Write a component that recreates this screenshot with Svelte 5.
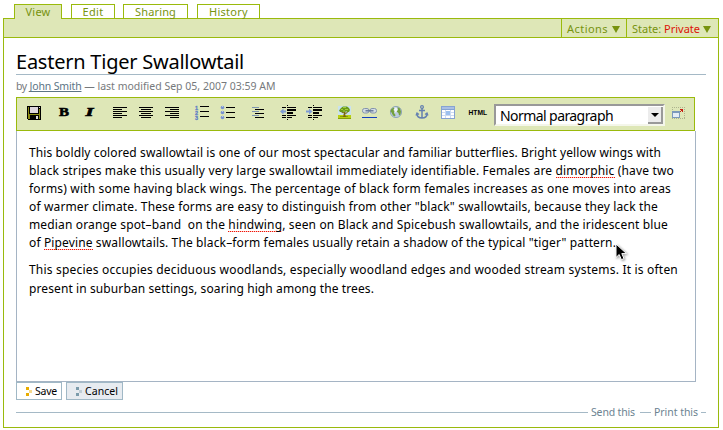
<script>
  // Spreads the letters of a run evenly so that it fills the given width.
  function fit(node, width) {
    const natural = node.getBoundingClientRect().width;
    node.style.letterSpacing = `${(width - natural) / node.textContent.length}px`;
  }

  const tabs = [
    { label: 'View', width: 48, text: 25, selected: true },
    { label: 'Edit', width: 44, text: 21 },
    { label: 'Sharing', width: 65, text: 41 },
    { label: 'History', width: 63, text: 39 }
  ];

  const paragraphs = [
    [
      [632, 'This boldly colored swallowtail is one of our most spectacular and familiar butterflies. Bright yellow wings with'],
      [645, 'black stripes make this usually very large swallowtail immediately identifiable. Females are *dimorphic* (have two'],
      [642, 'forms) with some having black wings. The percentage of black form females increases as one moves into areas'],
      [629, 'of warmer climate. These forms are easy to distinguish from other "black" swallowtails, because they lack the'],
      [639, 'median orange spot–band\u00a0 on the *hindwing*, seen on Black and Spicebush swallowtails, and the iridescent blue'],
      [587, 'of *Pipevine* swallowtails. The black–form females usually retain a shadow of the typical "tiger" pattern.']
    ],
    [
      [649, 'This species occupies deciduous woodlands, especially woodland edges and wooded stream systems. It is often'],
      [345, 'present in suburban settings, soaring high among the trees.']
    ]
  ];

  const groups = [
    ['save'],
    ['bold', 'italic'],
    ['left', 'center', 'right'],
    ['ol', 'ul'],
    ['dl'],
    ['outdent', 'indent'],
    ['image', 'link', 'globe', 'anchor', 'table'],
    ['html']
  ];
  const rows = [5, 7, 9, 11, 13, 15];
</script>

{#snippet icon(name)}
  <svg class="icon" width="20" height="20" viewBox="0 0 20 20" shape-rendering="crispEdges">
    {#if name === 'save'}
      <path fill="#000" d="M3 4h14v14H4v-1H3z" />
      <path fill="#8a8a12" d="M4 5h1v12H4zM15 7h1v10h-1zM5 12h10v1H5zM5 13h1v4H5z" />
      <path fill="#ddd6dd" d="M6 5h8v6H6zM15 5h1v1h-1z" />
      <path fill="#ddd" d="M12 14h2v3h-2z" />
    {:else if name === 'bold'}
      <text x="5" y="14" textLength="10" lengthAdjust="spacingAndGlyphs" class="b">B</text>
    {:else if name === 'italic'}
      <text x="5.500" y="14" textLength="8" lengthAdjust="spacingAndGlyphs" class="b i">I</text>
    {:else if name === 'left'}
      {#each rows as y, i}<rect x="3" {y} width={i % 2 ? 9 : 14} height="1" />{/each}
    {:else if name === 'center'}
      {#each rows as y, i}<rect x={i % 2 ? 5 : 3} {y} width={i % 2 ? 10 : 14} height="1" />{/each}
    {:else if name === 'right'}
      {#each rows as y, i}<rect x={i % 2 ? 8 : 3} {y} width={i % 2 ? 9 : 14} height="1" />{/each}
    {:else if name === 'ol'}
      <path d="M8 4h9v1H8zM8 9h9v1H8zM8 14h9v1H8z" />
      <g class="num"><text x="3" y="7.500">1</text><text x="3" y="12.500">2</text><text x="3" y="17.500">3</text></g>
    {:else if name === 'ul'}
      <path d="M8 5h9v1H8zM8 10h9v1H8zM8 15h9v1H8z" />
      {#each [5.5, 10.5, 15.5] as y}
        <circle cx="4.500" cy={y} r="1.800" fill="#7892d0" shape-rendering="auto" />
        <rect x="4" y={y - 1.5} width="1" height="1" fill="#b9c8ea" />
      {/each}
    {:else if name === 'dl'}
      <path fill="#7c93b0" d="M4 5h7v1H4zM4 9h7v1H4zM4 13h7v1H4z" />
      <path d="M7 7h9v1H7zM7 11h9v1H7zM7 15h9v1H7z" />
    {:else if name === 'outdent' || name === 'indent'}
      <path d="M4 5h4v1H4zM9 5h9v1H9zM9 7h9v2H9zM9 10h6v2H9zM9 13h9v1H9zM4 13h4v1H4zM4 15h4v1H4zM9 15h5v1H9zM9 3h1v1H9zM9 17h1v1H9z" />
      {#if name === 'outdent'}
        <path fill="#7f9bd2" shape-rendering="auto" d="M2 9.500l3.500-3v2H8v2H5.500v2z" />
      {:else}
        <path fill="#7f9bd2" shape-rendering="auto" d="M8.500 9.500l-3.500-3v2H2v2h3v2z" />
      {/if}
    {:else if name === 'image'}
      <path fill="#c9e2ef" d="M4 4h13v9H4z" />
      <path fill="#b9d010" d="M4 13h13v4H4z" />
      <path fill="#84a00c" d="M4 16h13v1H4zM6 14h8v1H6z" />
      <g shape-rendering="auto">
        <path fill="#7a6412" d="M9.500 9h2v5l1 1h-4l1-1zM7 10l3 2v-1l-2-1.500zM13 10l-2 1.500v1l3-2z" />
        <path fill="#6a9a18" d="M7 6l2-1.500h4L15 6l1 2-1 2h-2l-1-1-2 1.500L8 10H6L5 8.500z" />
        <path fill="#a3cc3c" d="M9 5h3v1H9zM7 7h2v1H7zM11 7h3v1h-3zM9 8.500h2v1H9z" />
      </g>
    {:else if name === 'link'}
      <g fill="none" shape-rendering="auto" stroke="#8494ad">
        <rect x="2.500" y="6.500" width="6.500" height="4.500" rx="2" fill="#d3dce3" />
        <rect x="10" y="6.500" width="6.500" height="4.500" rx="2" fill="#d3dce3" />
        <path stroke="#5d7094" stroke-width="1.300" d="M5.500 8.800h8" />
      </g>
      <path fill="#1440bd" d="M2 15h15v1H2z" />
    {:else if name === 'globe'}
      <g shape-rendering="auto">
        <circle cx="10" cy="10" r="5.600" fill="#bdcde0" stroke="#8aa0b4" stroke-width=".9" />
        <circle cx="9" cy="8" r="2.500" fill="#eef4f9" />
        <path fill="#73a03c" d="M5 7.500l2.500-2 1 .5-1 2 1 1-.5 2 1.500 2-.5 1.500-2-1-1.500-3-1-1zM11.500 5l2.500 1.500 1 3-.5 3-1.500 1-.5-2.500-2-1.500 1.500-1.500z" />
      </g>
    {:else if name === 'anchor'}
      <g fill="none" shape-rendering="auto" stroke="#6480b0" stroke-width="1.500">
        <circle cx="10" cy="5" r="1.400" stroke-width="1.200" />
        <path d="M10 6.500v10M7 8.500h6M5 11.500c0 3 2 4.500 5 4.500s5-1.500 5-4.500" />
        <path stroke-width="1.200" d="M4 13.500l1-2.500 2 1.500M16 13.500l-1-2.500-2 1.500" />
      </g>
    {:else if name === 'table'}
      <path fill="#86a3d2" d="M3 4h14v13H3z" />
      <path fill="#fff" d="M4 8h12v8H4z" />
      <path fill="#a9bfe4" d="M4 5h12v2H4z" />
      <path fill="#cbdaf2" d="M4 10h12v1H4zM4 13h12v1H4zM7 8h1v8H7zM12 8h1v8h-1z" />
      <path fill="#9cc0ee" d="M8 9h4v4H8z" />
    {:else if name === 'html'}
      <text x="0.500" y="13" textLength="18.500" lengthAdjust="spacingAndGlyphs" class="html">HTML</text>
    {/if}
  </svg>
{/snippet}

<div class="page">
  <nav class="tabs">
    {#each tabs as tab}
      <a class:selected={tab.selected} style:width="{tab.width}px"><span use:fit={tab.text}>{tab.label}</span></a>
    {/each}
  </nav>

  <main>
    <div class="actions">
      <div class="menu first"><span use:fit={41}>Actions</span><i></i></div>
      <div class="menu"><span use:fit={68}>State: <b>Private</b></span><i></i></div>
    </div>

    <div class="content">
      <h1><span use:fit={228}>Eastern Tiger Swallowtail</span></h1>
      <div class="byline"><span class="by">by</span><u use:fit={52}>John Smith</u><span use:fit={194}>&nbsp;— last modified Sep 05, 2007 03:59 AM</span></div>

      <div class="toolbar">
        {#each groups as group}
          <div class="group">
            {#each group as name}<span class="cell">{@render icon(name)}</span>{/each}
          </div>
        {/each}
        <div class="select">
          <span class="value"><span use:fit={113}>Normal paragraph</span></span>
          <span class="drop"><i></i></span>
        </div>
        <svg class="expand" width="13" height="12" viewBox="0 0 13 12" shape-rendering="crispEdges">
          <path fill="none" stroke="#adb48e" stroke-dasharray="1 1" d="M0 .5h13M12.500 0v12M0 11.500h13M.5 0v12" />
          <path fill="#7b99bb" d="M0 4h8v7H0z" />
          <path fill="#e4edf5" d="M1 6h6v4H1z" />
          <path fill="#c81e10" d="M8 2h3v3h-1V4H9v1H8V4h1V3H8z" />
        </svg>
      </div>

      <div class="editor">
        {#each paragraphs as lines}
          <p>
            {#each lines as [width, text]}
              <span class="line"><span use:fit={width}>{#each text.split('*') as part, i}{#if i % 2}<em>{part}</em>{:else}{part}{/if}{/each}</span></span>
            {/each}
          </p>
        {/each}
      </div>

      <div class="buttons">
        <button class="save"><svg width="6" height="9" viewBox="0 0 6 9" shape-rendering="crispEdges"><path fill="#e8ac00" d="M0 0h3v3H0zM0 6h3v3H0z" /><path fill="#f6d88b" d="M3 3h3v3H3z" /></svg><span use:fit={22}>Save</span></button>
        <button class="cancel"><svg width="6" height="9" viewBox="0 0 6 9" shape-rendering="crispEdges"><path fill="#7b9bab" d="M0 0h3v3H0zM0 6h3v3H0z" /><path fill="#bfcdd5" d="M3 3h3v3H3z" /></svg><span use:fit={33}>Cancel</span></button>
      </div>

      <footer>
        <hr class="long" /><span use:fit={44}>Send this</span><hr class="mid" /><span use:fit={44}>Print this</span><hr class="short" />
      </footer>
    </div>
  </main>

  <svg class="pointer" width="14" height="19" viewBox="0 0 14 19">
    <path fill="#000" stroke="#fff" stroke-width="1" d="M1 1v13.500l3.200-3 2.200 5.200 2.600-1.100-2.200-5h4.700z" />
  </svg>
</div>

<style>
  :global(body) { background: #fff; }
  .page {
    position: relative;
    box-sizing: border-box;
    width: 723px;
    height: 430px;
    padding: 4px 4px 2px 3px;
    font: 11px/14px 'Noto Sans', 'Open Sans', sans-serif;
    color: #000;
    white-space: nowrap;
    overflow: hidden;
  }
  .tabs { display: flex; height: 14px; padding-left: 11px; }
  .tabs a {
    box-sizing: border-box;
    display: flex;
    justify-content: center;
    height: 14px;
    margin-right: 9px;
    border: 1px solid #9aba0c;
    border-bottom: 0;
    color: #77930f;
    line-height: 13px;
  }
  .tabs a:nth-child(2) { margin-right: 8px; }
  .tabs a.selected { height: 15px; background: #dee7b7; position: relative; z-index: 1; }
  main {
    box-sizing: border-box;
    width: 716px;
    height: 410px;
    border: 1px solid #9aba0c;
  }
  .actions {
    display: flex;
    justify-content: flex-end;
    height: 18px;
    background: #dee7b7;
    border-bottom: 1px solid #9aba0c;
    color: #77930f;
  }
  .menu {
    box-sizing: border-box;
    display: flex;
    align-items: center;
    justify-content: space-between;
    width: 92px;
    padding: 1px 7px 0 5px;
    border-left: 1px solid #9aba0c;
  }
  .menu.first { width: 65px; padding-right: 6px; }
  .menu b { font-weight: 400; color: #dc1408; }
  .menu i { margin-top: 2px; border: 4px solid transparent; border-top: 7px solid #77930f; border-bottom: 0; }
  .content { padding: 11px 12px 0 12px; }
  h1 {
    height: 25px;
    margin: 0;
    border-bottom: 1px solid #a5b9c6;
    font: 20px/26px 'Noto Sans', sans-serif;
  }
  .byline { height: 22px; line-height: 22px; color: #76797c; font-size: 10.500px; }
  .by { display: inline-block; width: 13.500px; letter-spacing: -.4px; }
  u { color: #5c7485; text-decoration: underline; text-underline-offset: 1px; text-decoration-skip-ink: none; }
  .toolbar {
    box-sizing: border-box;
    display: flex;
    width: 679px;
    height: 34px;
    padding: 4px 0 0 4px;
    border: 1px solid #9aba0c;
    background: #dee7b7;
  }
  .group { display: flex; margin-right: 4px; }
  .cell { display: flex; width: 26px; justify-content: center; }
  .icon { display: block; overflow: visible; }
  .b { font: 700 13px 'Liberation Serif', serif; stroke: #000; stroke-width: .6; }
  .i { font-style: italic; }
  .num { font: 700 5.500px 'Liberation Sans', sans-serif; fill: #5e7fc4; stroke: #5e7fc4; stroke-width: .3; }
  .html { font: 700 7.500px 'Liberation Sans', sans-serif; }
  .select {
    box-sizing: border-box;
    display: flex;
    width: 171px;
    height: 22px;
    margin: 2px 0 0 -1px;
    border: 2px solid #999;
    border-right-color: #f4f6ea;
    border-bottom-color: #f4f6ea;
    background: #fff;
  }
  .value { flex: 1; padding-left: 4px; font-size: 14px; line-height: 19px; }
  .drop {
    box-sizing: border-box;
    display: flex;
    align-items: center;
    justify-content: center;
    width: 15px;
    height: 17px;
    margin-top: 1px;
    border-right: 2px solid #999;
    border-bottom: 2px solid #999;
    background: #ececec;
  }
  .drop i { border: 4px solid transparent; border-top: 4px solid #000; border-bottom: 0; }
  .expand { margin: 5px 0 0 7px; }
  .editor {
    box-sizing: border-box;
    width: 680px;
    height: 251px;
    padding: 13px 12px 0;
    border: 1px solid #a5b4c4;
    border-top: 0;
    font-size: 12px;
    line-height: 18px;
  }
  .editor p { margin: 0 0 8px; }
  .editor p + p { line-height: 19px; }
  .line { display: block; }
  em {
    font-style: normal;
    background: repeating-linear-gradient(90deg, #f01408 0 1px, #fcc4be 1px 2px) 0 15px / 100% 1px no-repeat;
  }
  .buttons { display: flex; gap: 4px; height: 18px; }
  button {
    box-sizing: border-box;
    display: flex;
    align-items: center;
    gap: 3px;
    width: 46px;
    height: 18px;
    padding: 0 0 0 9px;
    border: 1px solid #a0b8c6;
    border-radius: 0;
    background: #fff;
    font: 10.500px/16px 'Noto Sans', sans-serif;
    color: #000;
  }
  .cancel { width: 57px; background: #e7ebf0; }
  footer { display: flex; align-items: center; margin-top: 5px; height: 14px; color: #6c8391; font-size: 10.500px; }
  hr { height: 1px; margin: 0; border: 0; background: #a5b9c6; }
  .long { width: 572px; margin-right: 3px; }
  .mid { width: 11px; margin: 0 3px 0 5px; }
  .short { width: 5px; margin-left: 3px; }
  .pointer { position: absolute; left: 615px; top: 243px; filter: drop-shadow(1px 1px 1px #0006); }
</style>
